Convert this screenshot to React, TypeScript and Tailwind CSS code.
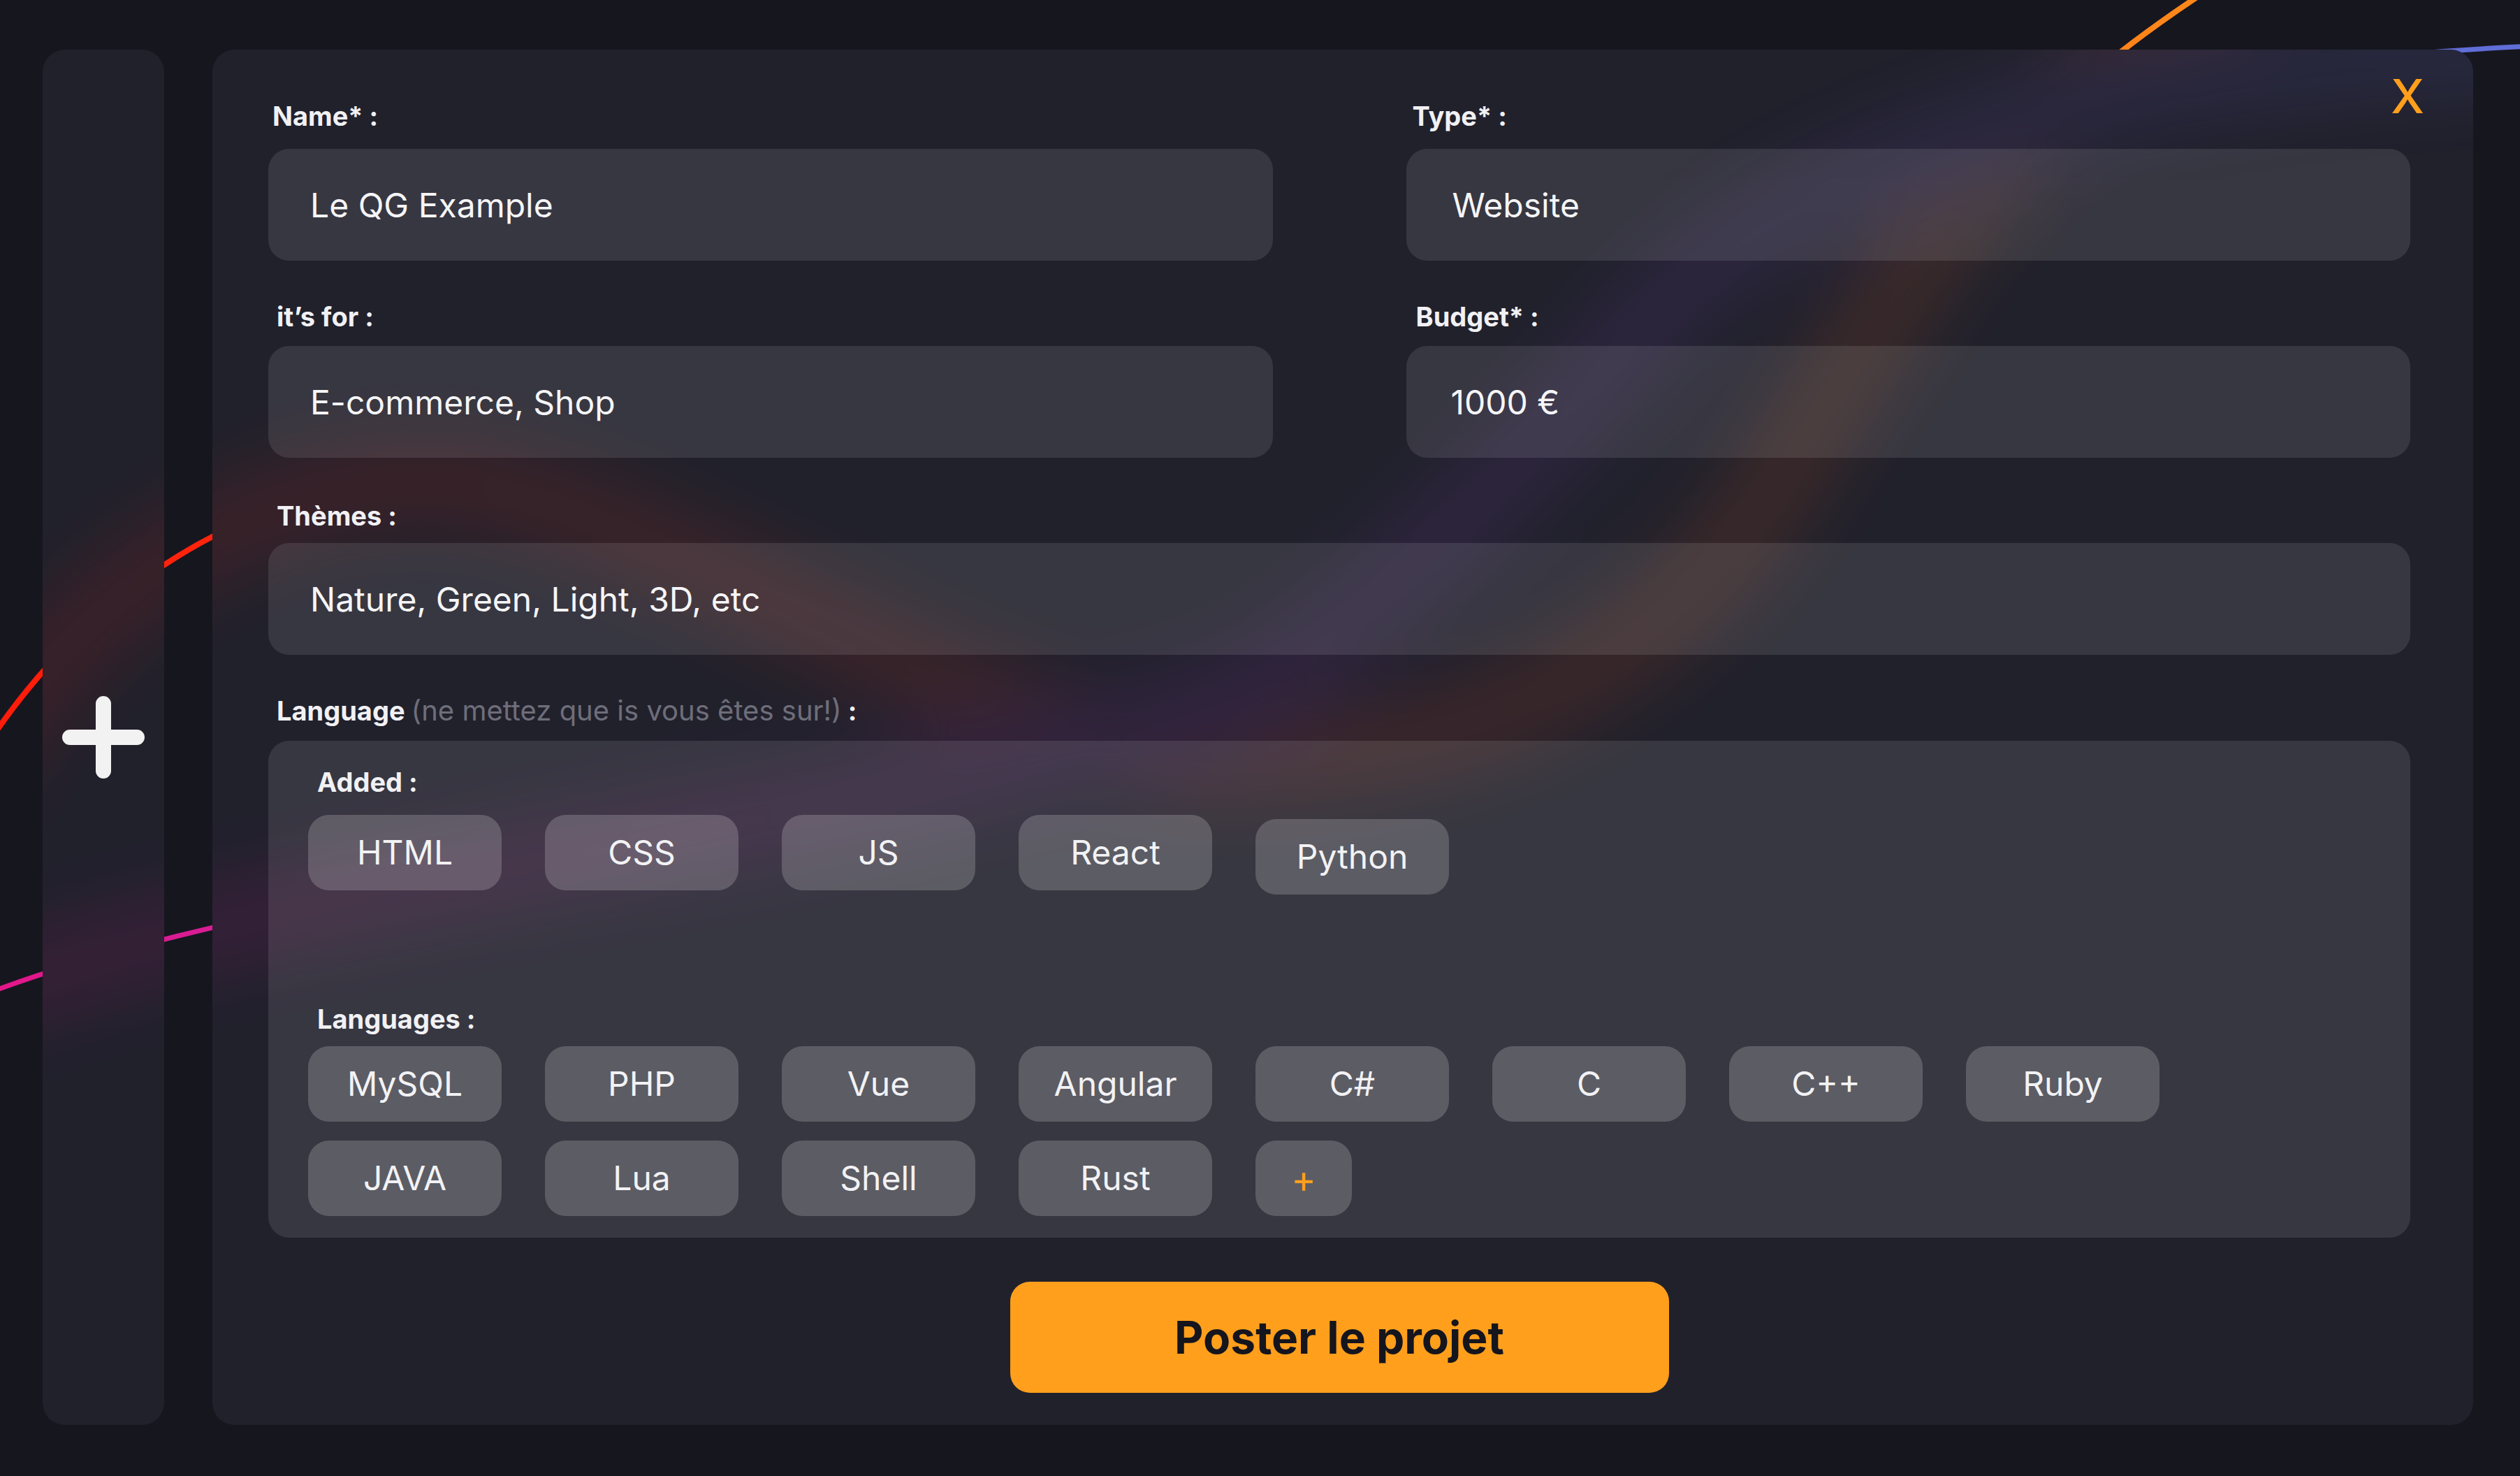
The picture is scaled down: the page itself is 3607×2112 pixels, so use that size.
import { type ReactNode } from 'react';

// background waves, in page coordinates (3607 x 2112)
const WAVE_A =
  'M -40 1100 C 80 900 300 700 600 690 C 900 680 1400 1085 1750 1085 C 2050 1085 2350 1000 2550 680 C 2750 360 2850 180 3200 -40';
const WAVE_B =
  'M -40 1430 C 380 1260 1200 1200 1750 1000 C 1900 945 2150 700 2350 470 C 2550 240 3000 90 3650 65';

function Gradients({ id }: { id: string }) {
  return (
    <>
      <linearGradient id={`${id}-a`} gradientUnits="userSpaceOnUse" x1="0" y1="1000" x2="3200" y2="0">
        <stop offset="0" stopColor="#ff1c0a" />
        <stop offset="0.45" stopColor="#ff3d14" />
        <stop offset="1" stopColor="#ff8a1a" />
      </linearGradient>
      <linearGradient id={`${id}-b`} gradientUnits="userSpaceOnUse" x1="0" y1="1400" x2="3607" y2="60">
        <stop offset="0" stopColor="#e3178a" />
        <stop offset="0.5" stopColor="#9a3cc8" />
        <stop offset="1" stopColor="#5e6fd8" />
      </linearGradient>
    </>
  );
}

function Glow({ id, viewBox }: { id: string; viewBox: string }) {
  return (
    <svg
      className="pointer-events-none absolute inset-0 h-full w-full"
      viewBox={viewBox}
      preserveAspectRatio="none"
    >
      <defs>
        <Gradients id={id} />
        <filter id={`${id}-blur`} filterUnits="userSpaceOnUse" x="-400" y="-400" width="4400" height="2900">
          <feGaussianBlur stdDeviation="45" />
        </filter>
      </defs>
      <g filter={`url(#${id}-blur)`} opacity="0.11" fill="none" strokeWidth="130" strokeLinecap="round">
        <path d={WAVE_A} stroke={`url(#${id}-a)`} />
        <path d={WAVE_B} stroke={`url(#${id}-b)`} />
      </g>
    </svg>
  );
}

const labelCls = 'text-[38px] font-bold leading-[46px] text-[#f1f1f4]';
const inputCls =
  'block h-[160px] w-full rounded-[30px] bg-white/10 pl-[60px] text-[48px] text-[#f5f5f7] outline-none';

function Chip({ children, className = '' }: { children: ReactNode; className?: string }) {
  return (
    <button
      type="button"
      className={`flex h-[108px] w-[277px] shrink-0 items-center justify-center rounded-[30px] bg-white/[0.19] text-[48px] text-[#f2f2f4] ${className}`}
    >
      {children}
    </button>
  );
}

const added = ['HTML', 'CSS', 'JS', 'React', 'Python'];
const row1 = ['MySQL', 'PHP', 'Vue', 'Angular', 'C#', 'C', 'C++', 'Ruby'];
const row2 = ['JAVA', 'Lua', 'Shell', 'Rust'];

export default function App() {
  return (
    <div className="relative h-[2112px] w-full overflow-hidden bg-[#16161f] font-['Inter',sans-serif]">
      <svg className="absolute inset-0 h-full w-full" viewBox="0 0 3607 2112" preserveAspectRatio="none">
        <defs>
          <Gradients id="bg" />
        </defs>
        <path d={WAVE_A} stroke="url(#bg-a)" strokeWidth="8" fill="none" />
        <path d={WAVE_B} stroke="url(#bg-b)" strokeWidth="7" fill="none" />
      </svg>

      <div className="relative flex h-full gap-[69px] pb-[73px] pl-[61px] pr-[67px] pt-[71px]">
        <aside className="relative flex w-[174px] shrink-0 items-center justify-center overflow-hidden rounded-[32px] bg-[#21212c]">
          <Glow id="side" viewBox="61 71 174 1968" />
          <svg className="relative" width="118" height="118" viewBox="0 0 118 118">
            <path d="M11 59H107M59 11V107" stroke="#f2f2f2" strokeWidth="22" strokeLinecap="round" />
          </svg>
        </aside>

        <main className="relative flex-1 overflow-hidden rounded-[32px] bg-[#21212c] pl-[80px] pr-[90px] pt-[72px]">
          <Glow id="main" viewBox="304 71 3236 1968" />

          <button
            type="button"
            className="absolute right-[70px] top-[32px] z-10 text-[68px] font-medium leading-none text-[#ff9f1c]"
          >
            X
          </button>

          <div className="relative">
            <div className="grid grid-cols-2 gap-x-[191px]">
              <div>
                <p className={`${labelCls} pl-[6px]`}>Name* :</p>
                <input readOnly defaultValue="Le QG Example" className={`${inputCls} mt-[24px]`} />
              </div>
              <div>
                <p className={`${labelCls} pl-[9px]`}>Type* :</p>
                <input readOnly defaultValue="Website" className={`${inputCls} mt-[24px] pl-[66px]`} />
              </div>
            </div>

            <div className="mt-[57px] grid grid-cols-2 gap-x-[191px]">
              <div>
                <p className={`${labelCls} pl-[12px]`}>it’s for :</p>
                <input readOnly defaultValue="E-commerce, Shop" className={`${inputCls} mt-[19px]`} />
              </div>
              <div>
                <p className={`${labelCls} pl-[14px]`}>Budget* :</p>
                <input readOnly defaultValue="1000 €" className={`${inputCls} mt-[19px] pl-[64px]`} />
              </div>
            </div>

            <div className="mt-[60px]">
              <p className={`${labelCls} pl-[12px]`}>Thèmes :</p>
              <input
                readOnly
                defaultValue="Nature, Green, Light, 3D, etc"
                className={`${inputCls} mt-[16px]`}
              />
            </div>

            <div className="mt-[57px]">
              <p className={`${labelCls} pl-[12px]`}>
                Language{' '}
                <span className="text-[40px] font-normal text-[#6e6e7a]">(ne mettez que is vous êtes sur!)</span> :
              </p>
              <div className="mt-[20px] rounded-[30px] bg-white/10 pb-[31px] pl-[57px] pt-[36px]">
                <p className={`${labelCls} pl-[13px]`}>Added :</p>
                <div className="mt-[24px] flex gap-x-[62px]">
                  {added.map((l) => (
                    <Chip key={l} className={l === 'Python' ? 'translate-y-[6px]' : ''}>
                      {l}
                    </Chip>
                  ))}
                </div>

                <p className={`${labelCls} mt-[161px] pl-[13px]`}>Languages :</p>
                <div className="mt-[16px] flex gap-x-[62px]">
                  {row1.map((l) => (
                    <Chip key={l}>{l}</Chip>
                  ))}
                </div>
                <div className="mt-[27px] flex gap-x-[62px]">
                  {row2.map((l) => (
                    <Chip key={l}>{l}</Chip>
                  ))}
                  <button
                    type="button"
                    className="flex h-[108px] w-[138px] items-center justify-center rounded-[30px] bg-white/[0.19] text-[54px] text-[#ff9f1c]"
                  >
                    +
                  </button>
                </div>
              </div>
            </div>

            <button
              type="button"
              className="mx-auto mt-[63px] flex h-[159px] w-[943px] items-center justify-center rounded-[28px] bg-[#ff9f1c] text-[64px] font-bold text-[#15151d]"
            >
              Poster le projet
            </button>
          </div>
        </main>
      </div>
    </div>
  );
}
